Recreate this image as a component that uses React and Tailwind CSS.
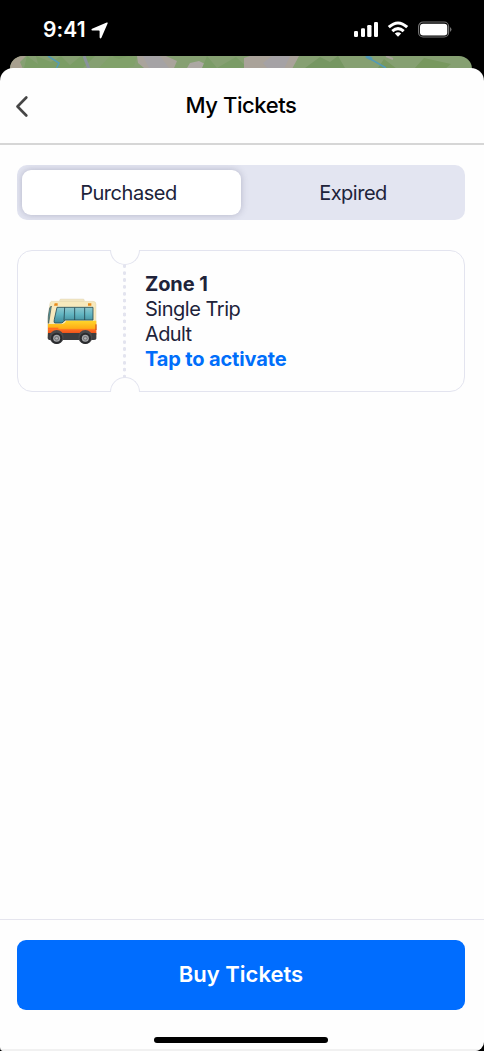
import React from "react";

function StatusBar() {
  return (
    <div className="flex h-14 items-start justify-between pl-[43px] pr-[32px] pt-[18px] text-white">
      <div className="flex items-center gap-[5px]">
        <span className="text-[21px] font-semibold leading-6 tracking-[0.1px]">9:41</span>
        <svg width="17" height="17" viewBox="0 0 17 17" fill="currentColor">
          <path d="M15.7.5Q17.1 0 16.6 1.5L10.4 15.7Q9.4 17.3 8.6 15.5V9.3Q8.6 8.5 7.8 8.5H1.4Q-.4 7.8 1.1 6.8Z" />
        </svg>
      </div>
      <div className="flex h-6 items-center">
        <svg width="98" height="18" viewBox="0 0 98 18" fill="currentColor">
          <rect x="0" y="10" width="4" height="6" rx="1.2" />
          <rect x="7" y="7.3" width="4" height="8.7" rx="1.2" />
          <rect x="13.2" y="4" width="4.3" height="12" rx="1.2" />
          <rect x="20" y="1" width="4" height="15" rx="1.2" />
          <g fill="none" stroke="currentColor" strokeWidth="3">
            <path d="M34.8 6.2Q44-2.3 53.2 6.2" />
            <path d="M38.3 10.1Q44 5.1 49.7 10.1" />
          </g>
          <path d="M40.8 12.5Q44 9.9 47.2 12.5L44 15.8Z" />
          <rect x="64.6" y="1" width="30" height="15" rx="4.5" fill="none" stroke="#747474" strokeWidth="1.2" />
          <rect x="66" y="2.7" width="27.3" height="11.8" rx="3" />
          <path d="M96 6Q99 8.5 96 11Z" fill="#747474" />
        </svg>
      </div>
    </div>
  );
}

function MapStrip() {
  return (
    <div className="ml-[10px] mr-[12px] h-6 overflow-hidden rounded-t-[13px] bg-[#86a072]">
      <svg width="464" height="24" viewBox="10 56 464 24">
        <path d="M10 56H26L20 62L23 69H10Z" fill="#a8a08f" />
        <path d="M27 56L38 64L36 56L51 62L61 56L70 65L81 56H95L83 68H24Z" fill="#7b9d65" />
        <path d="M103 68L116 60L113 56H132L135 61L124 69Z" fill="#7b9d65" />
        <path d="M110 56L119 59L128 56L137 57L134 66L124 69H98Z" fill="#81a16a" />
        <path d="M137 56H166L177 61L174 68H144L138 63Z" fill="#aaa49c" />
        <path d="M143 56H160L169 68H149Z" fill="#a5a3a5" />
        <path d="M187 68L190 63L199 61L207 65V69Z" fill="#aca8a3" />
        <path d="M207 56L217 68L236 57L248 68H202Z" fill="#7b9c67" />
        <path d="M244 58L250 56H299L292 69H244Z" fill="#aaa39a" />
        <path d="M263 63L272 56H290L284 69H268Z" fill="#a5a2a5" />
        <path d="M305 68L320 57L330 62L338 56L345 68Z" fill="#769762" />
        <path d="M378 68L384 59L397 69ZM414 69L424 58L451 64L445 69Z" fill="#78985f" />
        <path d="M48 56L59 63L56 69M366 57L374 61L386 68" fill="none" stroke="#539ab5" strokeWidth="1.5" />
        <path d="M366 56L372 59" stroke="#539ab5" strokeWidth="3" />
        <path d="M84 56L89 69" stroke="#8a929d" strokeWidth="3" />
        <path d="M386 56L393 59" stroke="#aaa49c" strokeWidth="2" />
      </svg>
    </div>
  );
}

function Wheel({ cx }) {
  return (
    <g>
      <circle cx={cx} cy="147" r="21" fill="#4a494b" />
      <circle cx={cx} cy="151" r="17" fill="#2a2b2e" />
      <circle cx={cx} cy="151" r="10.5" fill="#a7a8aa" />
      <circle cx={cx} cy="151" r="7" fill="#77787b" />
      <circle cx={cx} cy="151" r="3.5" fill="#b5b6b8" />
    </g>
  );
}

function BusIcon() {
  return (
    <svg width="70" height="66" viewBox="0 0 210 198">
      <defs>
        <linearGradient id="glass" x1="0" y1="0" x2="0" y2="1">
          <stop stopColor="#91c9cf" />
          <stop offset=".45" stopColor="#62b5c1" />
          <stop offset="1" stopColor="#3e8797" />
        </linearGradient>
        <linearGradient id="body" x1="0" y1="0" x2="0" y2="1">
          <stop stopColor="#ffd62b" />
          <stop offset=".55" stopColor="#ffad17" />
          <stop offset=".65" stopColor="#ff6c22" />
          <stop offset="1" stopColor="#e84818" />
        </linearGradient>
      </defs>
      <rect x="68" y="33" width="74" height="9" rx="4" fill="#f3e7c4" stroke="#d7cba9" />
      <path d="M43 40Q39 41 38 50L32 108V142Q32 151 42 151H177Q179 146 177 139V49Q177 40 168 40Z" fill="#f7e9bd" stroke="#d5c79e" />
      <path d="M43 54L35 106Q33 109 34 84L38 60Z" fill="#59a9b5" stroke="#394b48" strokeWidth="2" />
      <path d="M33 108H76Q83 108 88 98H178V140H33Z" fill="url(#body)" />
      <path d="M33 135H178V152Q177 156 170 156H40Q32 156 32 149Z" fill="#3d3d40" />
      <path d="M33 119H64V124H33Z" fill="#ff6d22" />
      <path d="M60 58H168V96H84Q78 105 73 105H53Q50 104 52 94Z" fill="url(#glass)" stroke="#294d56" strokeWidth="2.5" />
      <path d="M83 58L81 97M113 59V96M143 59V96" fill="none" stroke="#24454e" strokeWidth="2.5" />
      <path d="M53 46H62V53H51ZM153 46H163V53H153Z" fill="#e88a1b" />
      <path d="M177 109V126" stroke="#ca3c12" strokeWidth="3" />
      <Wheel cx="59" />
      <Wheel cx="145" />
    </svg>
  );
}

function TicketCard() {
  return (
    <div className="relative mt-[30px] flex h-[142px] rounded-[15px] border border-[#e3e4ef]">
      <div className="flex w-[105px] items-center justify-center pl-[3px]">
        <BusIcon />
      </div>
      <svg className="my-[13px] h-[114px] w-[3px]" viewBox="0 0 3 114">
        <path d="M1.5 2V114" stroke="#e3e4ef" strokeWidth="3.4" strokeLinecap="round" strokeDasharray="0.4 6.5" />
      </svg>
      <div className="flex flex-col pl-[19px] pt-[21px] text-[20px] leading-[25px] text-[#20233a]">
        <span className="font-bold tracking-[-0.1px]">Zone 1</span>
        <span className="tracking-[-0.48px]">Single Trip</span>
        <span className="tracking-[-0.6px]">Adult</span>
        <span className="font-bold tracking-[-0.14px] text-[#006efa]">Tap to activate</span>
      </div>
      <div className="absolute -top-px left-[92px] h-[15px] w-[30px] rounded-b-full border border-t-0 border-[#e3e4ef] bg-[#fefefe]" />
      <div className="absolute -bottom-px left-[92px] h-[15px] w-[30px] rounded-t-full border border-b-0 border-[#e3e4ef] bg-[#fefefe]" />
    </div>
  );
}

export default function App() {
  return (
    <div className="flex h-[1051px] w-[484px] flex-col overflow-hidden bg-black font-['Inter',sans-serif]">
      <StatusBar />
      <MapStrip />
      <div className="relative -mt-3 flex flex-1 flex-col overflow-hidden rounded-t-[13px] rounded-bl-[4px] rounded-br-[9px] bg-[#fefefe]">
        <header className="grid h-[77px] grid-cols-[1fr_auto_1fr] items-center border-b-2 border-[#d6d6d6] pl-[15px] pr-[17px]">
          <svg width="14" height="22" viewBox="0 0 14 22" fill="none" stroke="#464646" strokeWidth="2.6" strokeLinecap="round" strokeLinejoin="round">
            <path d="M11.3 2.5L2.5 11.5L11.3 20.5" />
          </svg>
          <h1 className="pb-[2px] text-[22px] font-medium leading-7 tracking-[-0.42px] text-black">My Tickets</h1>
        </header>
        <main className="flex-1 pl-[17px] pr-[19px] pt-5">
          <div className="flex h-[55px] overflow-hidden rounded-[10px] bg-[#e3e5f1] p-[5px] pr-0 text-[20px] text-[#20233a]">
            <button className="w-[219px] rounded-[9px] bg-white pr-[6px] tracking-[-0.45px] shadow-[0_0_7px_rgba(70,70,105,0.3)]">Purchased</button>
            <button className="flex-1 tracking-[-0.5px]">Expired</button>
          </div>
          <TicketCard />
        </main>
        <footer className="flex h-[132px] flex-col items-center border-t border-[#e5e5ee] pl-[17px] pr-[19px] pt-5">
          <button className="h-[70px] w-full rounded-[9px] bg-[#006dff] pb-[2px] text-[22px] font-semibold text-white">Buy Tickets</button>
          <div className="mt-[27px] h-[6px] w-[174px] rounded-full bg-black" />
          <div className="-mr-[19px] -ml-[17px] mt-[6px] h-[2px] w-[484px] shrink-0 bg-[#f1f1f1]" />
        </footer>
      </div>
    </div>
  );
}
